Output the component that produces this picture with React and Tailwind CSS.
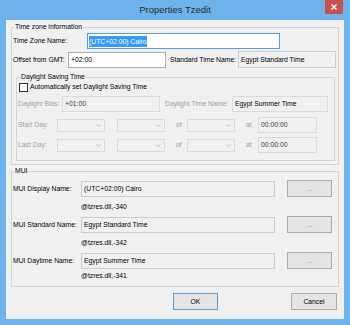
import React from 'react';

const tones = {
  normal: 'bg-white border-[#abadb3] text-black',
  focus: 'bg-white border-[#569de5] text-black',
  readonly: 'bg-[#f0f0f0] border-[#cdcdcd] text-black',
  disabled: 'bg-[#f0f0f0] border-[#dadada] text-[#444444]',
};

const Field = ({ className = '', tone = 'normal', children }) => (
  <div className={`flex items-center border px-[2px] ${tones[tone]} ${className}`}>
    {children}
  </div>
);

const Combo = ({ className = '' }) => (
  <div className={`flex items-center justify-end border border-[#dadada] bg-[#f0f0f0] pr-[3px] h-[13px] w-[48px] ${className}`}>
    <svg width="5" height="3" viewBox="0 0 5 3">
      <path d="M0.5 0.5 L2.5 2.5 L4.5 0.5" stroke="#b0b0b0" strokeWidth="0.8" fill="none" />
    </svg>
  </div>
);

const Button = ({ className = '', primary, children }) => (
  <div
    className={`flex items-center justify-center border bg-[#e5e5e5] ${
      primary ? 'border-[#5a9bd8]' : 'border-[#acacac]'
    } ${className}`}
  >
    {children}
  </div>
);

const DayRow = ({ label, className = '' }) => (
  <div className={`flex items-center h-[16px] ${className}`}>
    <span className="w-[39px] text-[#a3a3a3]">{label}</span>
    <Combo />
    <Combo className="ml-[12px]" />
    <span className="w-[22px] pl-[11px] text-[#a3a3a3]">of</span>
    <Combo />
    <span className="w-[23px] pl-[11px] text-[#a3a3a3]">at</span>
    <Field tone="disabled" className="w-[59px] h-[16px]">00:00:00</Field>
  </div>
);

const MuiRow = ({ label, value, className = '' }) => (
  <div className={`flex items-center h-[17px] ${className}`}>
    <span className="w-[68px]">{label}</span>
    <Field tone="readonly" className="w-[194px] h-[16px]">{value}</Field>
    <Button className="ml-[12px] w-[45px] h-[17px] text-[#8a8a8a]">...</Button>
  </div>
);

export default function App() {
  return (
    <div className="w-[350px] h-[325px] bg-[#6db2ea] flex flex-col whitespace-nowrap font-['Liberation_Sans',Arial,sans-serif] text-[6.8px] leading-[10px] text-black">
      <div className="h-[20px] grid grid-cols-[1fr_auto_1fr] items-start">
        <div />
        <div className="text-[9.5px] leading-[20px] text-[#2b2b2b]">Properties Tzedit</div>
        <div className="flex justify-end pr-[7px]">
          <div className="w-[18px] h-[14px] bg-[#c75050] flex items-center justify-center">
            <svg width="6" height="6" viewBox="0 0 6 6">
              <path d="M0.5 0.5 L5.5 5.5 M5.5 0.5 L0.5 5.5" stroke="#ffffff" strokeWidth="1.3" />
            </svg>
          </div>
        </div>
      </div>

      <div className="mx-[6px] mb-[6px] flex-1 bg-[#f0f0f0] flex flex-col pt-[2px] pl-[5px]">
        {/* Time zone information */}
        <fieldset className="w-[328px] border border-[#d5d5d5]">
          <legend className="ml-[2px] px-[1px] leading-[10px]">Time zone information</legend>
          <div className="pl-[1px] pt-[1px] pb-[3px]">
            <div className="flex items-center h-[16px]">
              <span className="w-[74px]">Time Zone Name:</span>
              <Field tone="focus" className="w-[193px] h-[16px] !px-[1px]">
                <span className="bg-[#3399ff] text-white leading-[11px]">(UTC+02:00) Cairo</span>
              </Field>
            </div>
            <div className="flex items-center h-[17px] mt-[2px]">
              <span className="w-[55px]">Offset from GMT:</span>
              <Field className="w-[98px] h-[16px]">+02:00</Field>
              <span className="w-[72px] pl-[4px]">Standard Time Name:</span>
              <Field tone="readonly" className="w-[98px] h-[17px]">Egypt Standard Time</Field>
            </div>

            {/* Daylight Saving Time */}
            <fieldset className="ml-[3px] mt-[4px] w-[319px] border border-[#d5d5d5]">
              <legend className="ml-[3px] px-[1px] leading-[10px]">Daylight Saving Time</legend>
              <div className="pl-[1px] pb-[7px]">
                <div className="flex items-center h-[10px] ml-[1px]">
                  <div className="w-[9px] h-[9px] border border-[#333333] bg-white" />
                  <span className="ml-[2px]">Automatically set Daylight Saving Time</span>
                </div>
                <div className="flex items-center h-[16px] mt-[4px]">
                  <span className="w-[44px] text-[#a3a3a3]">Daylight Bias:</span>
                  <Field tone="disabled" className="w-[98px] h-[16px]">+01:00</Field>
                  <span className="w-[72px] pl-[5px] text-[#a3a3a3]">Daylight Time Name:</span>
                  <Field tone="disabled" className="w-[96px] h-[16px] !text-black">Egypt Summer Time</Field>
                </div>
                <DayRow label="Start Day:" className="mt-[5px]" />
                <DayRow label="Last Day:" className="mt-[4px]" />
              </div>
            </fieldset>
          </div>
        </fieldset>

        {/* MUI */}
        <fieldset className="w-[328px] mt-[1px] border border-[#d5d5d5]">
          <legend className="ml-[2px] px-[1px] leading-[10px]">MUI</legend>
          <div className="pl-[1px] pb-[5px]">
            <MuiRow label="MUI Display Name:" value="(UTC+02:00) Cairo" className="mt-[4px]" />
            <div className="pl-[68px] mt-[5px]">@tzres.dll,-340</div>
            <MuiRow label="MUI Standard Name:" value="Egypt Standard Time" className="mt-[4px]" />
            <div className="pl-[68px] mt-[5px]">@tzres.dll,-342</div>
            <MuiRow label="MUI Daytime Name:" value="Egypt Summer Time" className="mt-[4px]" />
            <div className="pl-[68px] mt-[2px]">@tzres.dll,-341</div>
          </div>
        </fieldset>

        <div className="flex mt-[6px]">
          <Button primary className="ml-[162px] w-[45px] h-[17px]">OK</Button>
          <Button className="ml-[73px] w-[46px] h-[17px]">Cancel</Button>
        </div>
      </div>
    </div>
  );
}
